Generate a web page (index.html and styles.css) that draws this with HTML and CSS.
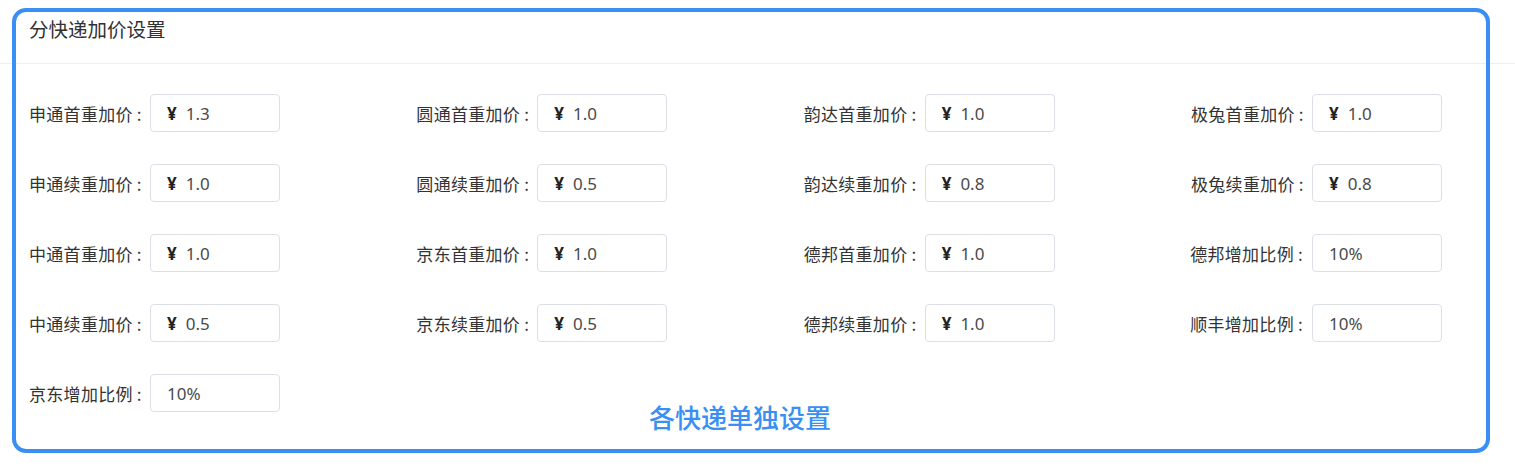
FILE: index.html
```html
<!DOCTYPE html>
<html lang="zh-CN">
<head>
<meta charset="utf-8">
<link rel="stylesheet" href="styles.css">
</head>
<body>
<div class="card">
  <div class="card-header">分快递加价设置</div>
  <div class="card-body">
    <div class="form-grid">
      <div class="item"><span class="label">申通首重加价<span class="colon">:</span></span><div class="input"><span class="cur">¥</span>1.3</div></div>
      <div class="item"><span class="label">圆通首重加价<span class="colon">:</span></span><div class="input"><span class="cur">¥</span>1.0</div></div>
      <div class="item"><span class="label">韵达首重加价<span class="colon">:</span></span><div class="input"><span class="cur">¥</span>1.0</div></div>
      <div class="item"><span class="label">极兔首重加价<span class="colon">:</span></span><div class="input"><span class="cur">¥</span>1.0</div></div>

      <div class="item"><span class="label">申通续重加价<span class="colon">:</span></span><div class="input"><span class="cur">¥</span>1.0</div></div>
      <div class="item"><span class="label">圆通续重加价<span class="colon">:</span></span><div class="input"><span class="cur">¥</span>0.5</div></div>
      <div class="item"><span class="label">韵达续重加价<span class="colon">:</span></span><div class="input"><span class="cur">¥</span>0.8</div></div>
      <div class="item"><span class="label">极兔续重加价<span class="colon">:</span></span><div class="input"><span class="cur">¥</span>0.8</div></div>

      <div class="item"><span class="label">中通首重加价<span class="colon">:</span></span><div class="input"><span class="cur">¥</span>1.0</div></div>
      <div class="item"><span class="label">京东首重加价<span class="colon">:</span></span><div class="input"><span class="cur">¥</span>1.0</div></div>
      <div class="item"><span class="label">德邦首重加价<span class="colon">:</span></span><div class="input"><span class="cur">¥</span>1.0</div></div>
      <div class="item"><span class="label wide">德邦增加比例<span class="colon">:</span></span><div class="input">10%</div></div>

      <div class="item"><span class="label">中通续重加价<span class="colon">:</span></span><div class="input"><span class="cur">¥</span>0.5</div></div>
      <div class="item"><span class="label">京东续重加价<span class="colon">:</span></span><div class="input"><span class="cur">¥</span>0.5</div></div>
      <div class="item"><span class="label">德邦续重加价<span class="colon">:</span></span><div class="input"><span class="cur">¥</span>1.0</div></div>
      <div class="item"><span class="label wide">顺丰增加比例<span class="colon">:</span></span><div class="input">10%</div></div>

      <div class="item"><span class="label">京东增加比例<span class="colon">:</span></span><div class="input">10%</div></div>
    </div>
  </div>
</div>
<div class="annot-box"></div>
<div class="annot-text">各快递单独设置</div>
</body>
</html>
```

FILE: styles.css
```css
html, body {
  margin: 0;
  padding: 0;
  background: #ffffff;
}
body {
  width: 1515px;
  height: 466px;
  position: relative;
  overflow: hidden;
  font-family: "Noto Sans CJK SC", "Noto Sans", sans-serif;
  color: #333333;
}
.card {
  background: #ffffff;
}
.card-header {
  height: 64px;
  box-sizing: border-box;
  padding: 0 0 6px 29px;
  display: flex;
  align-items: center;
  font-size: 19.5px;
  color: #303133;
  border-bottom: 1px solid #ebeef5;
}
.card-body {
  padding: 30px 0 0 29px;
}
.form-grid {
  display: grid;
  grid-template-columns: 387.33px 387.33px 387.33px 1fr;
  row-gap: 32px;
}
.item {
  display: flex;
  align-items: center;
  height: 38px;
}
.label {
  width: 112px;
  margin-right: 9px;
  font-size: 17px;
  letter-spacing: 0.3px;
  color: #333333;
  white-space: nowrap;
  text-align: right;
}
.label.wide {
  width: 121px;
  margin-left: -9px;
}
.colon {
  margin-left: 4px;
}
.input {
  width: 130px;
  height: 38px;
  box-sizing: border-box;
  border: 1px solid #dcdfe6;
  border-radius: 4px;
  padding-left: 16px;
  display: flex;
  align-items: center;
  font-size: 17px;
  color: #4a4a4a;
  font-family: "Noto Sans", "Noto Sans CJK SC", sans-serif;
}
.cur {
  font-weight: 700;
  color: #222222;
  margin-right: 9px;
  font-size: 17px;
}
.annot-box {
  position: absolute;
  left: 12px;
  top: 8px;
  width: 1478px;
  height: 445px;
  box-sizing: border-box;
  border: 4.5px solid #3a8ff5;
  border-radius: 14px;
}
.annot-text {
  position: absolute;
  left: 649px;
  top: 398px;
  font-size: 26px;
  font-weight: 500;
  color: #3a8ff5;
  line-height: 38px;
}
```
